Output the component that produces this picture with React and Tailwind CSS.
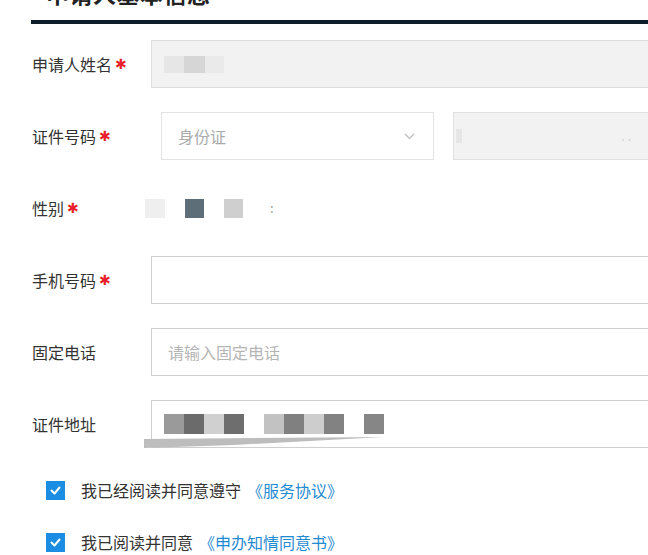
import React from 'react'

const font = { fontFamily: '"Noto Sans CJK SC", "Noto Sans", sans-serif' }

function Label({ text, required }) {
  return (
    <div className="w-[119px] shrink-0 text-[16px] text-[#333] flex items-center">
      <span>{text}</span>
      {required && (
        <span className="text-[#e8202e] text-[14px] ml-[3px] leading-none" style={{ fontFamily: '"DejaVu Sans", sans-serif' }}>
          ✱
        </span>
      )}
    </div>
  )
}

function Row({ children }) {
  return <div className="h-[72px] flex items-center">{children}</div>
}

function Check({ text, link }) {
  return (
    <div className="h-[52px] flex items-center pl-[14px]">
      <span className="w-[19px] h-[19px] bg-[#1b8de3] flex items-center justify-center">
        <svg width="11" height="9" viewBox="0 0 11 9" fill="none">
          <path d="M1.5 4.5l3 3 5-6" stroke="white" strokeWidth="2" strokeLinecap="round" strokeLinejoin="round" />
        </svg>
      </span>
      <span className="ml-[16px] text-[16px] text-[#333]">{text}</span>
      <span className="ml-[6px] text-[16px] text-[#1f8bd2]">{link}</span>
    </div>
  )
}

export default function App() {
  return (
    <div className="w-[648px] h-[555px] overflow-hidden bg-white" style={font}>
      {/* 标题 */}
      <div className="mt-[-18px] pl-[46px] text-[23px] leading-[23px] font-bold text-[#222] tracking-[0.5px]">
        申请人基本信息
      </div>
      <div className="mt-[15px] ml-[31px] h-[4px] bg-[#0d1d2a]" />

      <div className="pl-[32px] mt-[4px]">
        {/* 申请人姓名 */}
        <Row>
          <Label text="申请人姓名" required />
          <div className="flex-1 h-[48px] bg-[#f2f2f2] border border-r-0 border-[#dcdcdc] flex items-center pl-[12px]">
            <span className="w-[20px] h-[17px] bg-[#e6e6e6]" />
            <span className="w-[21px] h-[17px] bg-[#d6d6d6]" />
            <span className="w-[19px] h-[17px] bg-[#eaeaea]" />
          </div>
        </Row>

        {/* 证件号码 */}
        <Row>
          <Label text="证件号码" required />
          <div className="ml-[10px] w-[273px] h-[48px] border border-[#e3e3e3] flex items-center justify-between pl-[16px] pr-[18px]">
            <span className="text-[16px] text-[#aaa]">身份证</span>
            <svg width="11" height="7" viewBox="0 0 11 7" fill="none">
              <path d="M1 1l4.5 4.5L10 1" stroke="#bbb" strokeWidth="1.2" />
            </svg>
          </div>
          <div className="ml-[19px] flex-1 h-[48px] bg-[#f2f2f2] border border-r-0 border-[#e0e0e0] flex items-center justify-between pl-[2px] pr-[14px]">
            <span className="w-[6px] h-[14px] bg-[#e6e6e6]" />
            <span className="text-[12px] text-[#ccc] tracking-[3px]">..</span>
          </div>
        </Row>

        {/* 性别 */}
        <Row>
          <Label text="性别" required />
          <div className="ml-[-6px] flex items-center">
            <span className="w-[20px] h-[19px] bg-[#efefef]" />
            <span className="ml-[20px] w-[19px] h-[19px] bg-[#5e6e78]" />
            <span className="ml-[20px] w-[19px] h-[19px] bg-[#cfcfcf]" />
            <span className="ml-[27px] text-[13px] text-[#999]">:</span>
          </div>
        </Row>

        {/* 手机号码 */}
        <Row>
          <Label text="手机号码" required />
          <div className="flex-1 h-[48px] border border-r-0 border-[#cfcfcf]" />
        </Row>

        {/* 固定电话 */}
        <Row>
          <Label text="固定电话" />
          <div className="flex-1 h-[48px] border border-r-0 border-[#cfcfcf] flex items-center pl-[16px]">
            <span className="text-[16px] text-[#b5b5b5]">请输入固定电话</span>
          </div>
        </Row>

        {/* 证件地址 */}
        <Row>
          <Label text="证件地址" />
          <div className="relative flex-1 h-[48px] border border-r-0 border-[#cfcfcf] flex items-center pl-[12px]">
            <span className="w-[20px] h-[20px] bg-[#9a9a9a]" />
            <span className="w-[20px] h-[20px] bg-[#6b6b6b]" />
            <span className="w-[20px] h-[20px] bg-[#d0d0d0]" />
            <span className="w-[20px] h-[20px] bg-[#6e6e6e]" />
            <span className="w-[20px] h-[20px] bg-white" />
            <span className="w-[20px] h-[20px] bg-[#c2c2c2]" />
            <span className="w-[20px] h-[20px] bg-[#808080]" />
            <span className="w-[20px] h-[20px] bg-[#cdcdcd]" />
            <span className="w-[20px] h-[20px] bg-[#828282]" />
            <span className="w-[20px] h-[20px] bg-white" />
            <span className="w-[20px] h-[20px] bg-[#868686]" />
            <svg className="absolute left-[-8px] top-[36px]" width="260" height="12" viewBox="0 0 260 12">
              <polygon points="0,2 240,0 90,8 0,11" fill="#bdbdbd" />
            </svg>
          </div>
        </Row>
      </div>

      {/* 协议 */}
      <div className="mt-[4px] pl-[32px]">
        <Check text="我已经阅读并同意遵守" link="《服务协议》" />
        <Check text="我已阅读并同意" link="《申办知情同意书》" />
      </div>
    </div>
  )
}
